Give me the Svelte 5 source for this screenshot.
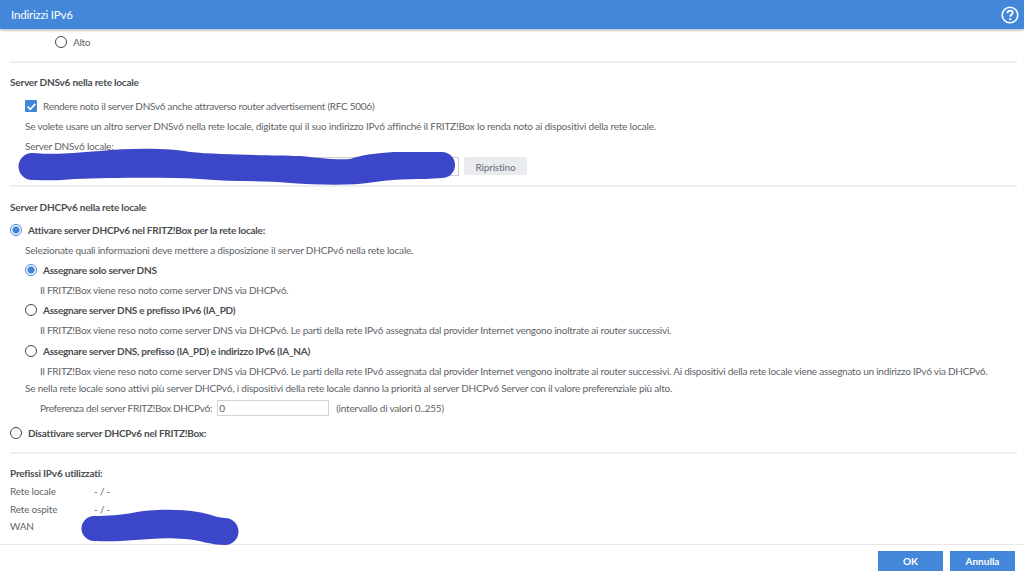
<script>
  const dnsOptions = [
    { label: 'Assegnare solo server DNS', checked: true, note: 'Il FRITZ!Box viene reso noto come server DNS via DHCPv6.' },
    { label: 'Assegnare server DNS e prefisso IPv6 (IA_PD)', checked: false, note: 'Il FRITZ!Box viene reso noto come server DNS via DHCPv6. Le parti della rete IPv6 assegnata dal provider Internet vengono inoltrate ai router successivi.' },
    { label: 'Assegnare server DNS, prefisso (IA_PD) e indirizzo IPv6 (IA_NA)', checked: false, note: 'Il FRITZ!Box viene reso noto come server DNS via DHCPv6. Le parti della rete IPv6 assegnata dal provider Internet vengono inoltrate ai router successivi. Ai dispositivi della rete locale viene assegnato un indirizzo IPv6 via DHCPv6.' }
  ];
  const prefixes = [
    { name: 'Rete locale', value: '- / -' },
    { name: 'Rete ospite', value: '- / -' },
    { name: 'WAN', value: '' }
  ];
</script>

<div class="dialog">
  <header class="topbar">
    <span class="title">Indirizzi IPv6</span>
    <svg class="help" width="18" height="18" viewBox="0 0 18 18">
      <circle cx="9" cy="9" r="7.8" fill="none" stroke="#fff" stroke-width="1.6" />
      <path d="M6.4 7.2c0-1.6 1.1-2.6 2.7-2.6s2.6 1 2.6 2.2c0 1.9-2.5 1.9-2.5 3.9" fill="none" stroke="#fff" stroke-width="1.8" />
      <circle cx="9.2" cy="13.2" r="1.1" fill="#fff" />
    </svg>
  </header>

  <main class="content">
    <label class="row alto"><span class="radio"></span>Alto</label>
    <hr />

    <h3>Server DNSv6 nella rete locale</h3>
    <div class="indent">
      <label class="row">
        <span class="check">
          <svg width="11" height="11" viewBox="0 0 11 11"><path d="M1.6 5.6l2.7 2.7 5-5.4" fill="none" stroke="#fff" stroke-width="1.7" /></svg>
        </span>
        Rendere noto il server DNSv6 anche attraverso router advertisement (RFC 5006)
      </label>
      <p>Se volete usare un altro server DNSv6 nella rete locale, digitate qui il suo indirizzo IPv6 affinché il FRITZ!Box lo renda noto ai dispositivi della rete locale.</p>
      <p>Server DNSv6 locale:</p>
      <div class="server-row">
        <input class="server-input" type="text" />
        <button class="reset" type="button">Ripristino</button>
      </div>
    </div>
    <hr class="second" />

    <h3 class="dhcp-title">Server DHCPv6 nella rete locale</h3>
    <label class="row strong first"><span class="radio on"></span>Attivare server DHCPv6 nel FRITZ!Box per la rete locale:</label>
    <div class="indent">
      <p>Selezionate quali informazioni deve mettere a disposizione il server DHCPv6 nella rete locale.</p>
      {#each dnsOptions as opt}
        <label class="row strong"><span class="radio" class:on={opt.checked}></span>{opt.label}</label>
        <p class="note">{opt.note}</p>
      {/each}
      <p class="tight">Se nella rete locale sono attivi più server DHCPv6, i dispositivi della rete locale danno la priorità al server DHCPv6 Server con il valore preferenziale più alto.</p>
      <div class="pref">
        <span class="pref-label">Preferenza del server FRITZ!Box DHCPv6:</span>
        <input class="pref-input" type="text" value="0" />
        <span class="range">(intervallo di valori 0..255)</span>
      </div>
    </div>
    <label class="row strong off"><span class="radio"></span>Disattivare server DHCPv6 nel FRITZ!Box:</label>
    <hr class="third" />

    <h3 class="prefix-title">Prefissi IPv6 utilizzati:</h3>
    <dl class="prefixes">
      {#each prefixes as p}
        <dt>{p.name}</dt>
        <dd>{p.value}</dd>
      {/each}
    </dl>
  </main>

  <footer class="actions">
    <button class="primary" type="button">OK</button>
    <button class="primary" type="button">Annulla</button>
  </footer>

  <!-- scribbles painted over the addresses -->
  <svg class="scribble" width="1024" height="575" viewBox="0 0 1024 575">
    <path d="M32 153C60 155 70 153 100 151C130 148 170 148 190 152C220 155 270 155 300 156C320 158 335 160 350 159C365 154 385 152 400 152L442 152A13 13 0 0 1 442 178C420 180 400 178 375 182C350 186 320 185 290 183C260 180 230 182 200 179C160 177 110 178 75 179C55 181 45 180 32 180A13.500 13.500 0 0 1 32 153Z" fill="#3c46c8" />
    <path d="M94 516C110 516 120 515 132 513C150 509 180 509 198 512C210 514 218 518 225 518A13 13 0 0 1 225 545C210 545 200 540 185 539C165 537 150 539 135 540C115 542 100 541 94 541A12.500 12.500 0 0 1 94 516Z" fill="#3c46c8" />
  </svg>
</div>

<style>
  :global(body) {
    margin: 0;
    background: #fff;
  }
  .dialog {
    position: relative;
    width: 1024px;
    height: 575px;
    overflow: hidden;
    display: flex;
    flex-direction: column;
    font-family: Lato, "Open Sans", sans-serif;
    font-size: 10px;
    letter-spacing: -0.2px;
    color: #5f6367;
  }
  .topbar {
    height: 29px;
    flex: none;
    display: flex;
    align-items: center;
    justify-content: space-between;
    padding: 0 5px 0 11px;
    background: #4287d9;
    box-shadow: 0 1px 3px rgba(0, 0, 0, 0.35);
    color: #fff;
    position: relative;
  }
  .title {
    font-size: 11.5px;
  }
  .content {
    flex: 1;
    padding: 3px 7px 0 10px;
    line-height: 20px;
  }
  hr {
    border: 0;
    border-top: 2px solid #eceef0;
    margin: 9px 0 9px;
  }
  hr.second {
    margin: 9px 0 10px;
  }
  hr.third {
    margin: 9px 0 9px;
  }
  h3 {
    margin: 0;
    font-size: 10px;
    line-height: 20px;
    font-weight: 700;
    color: #4a4d51;
  }
  .dhcp-title {
    margin-bottom: 3px;
  }
  .row {
    display: flex;
    align-items: center;
    gap: 6px;
    height: 20px;
    letter-spacing: -0.28px;
  }
  .row.strong {
    font-weight: 700;
    color: #4a4d51;
    letter-spacing: -0.25px;
  }
  .alto {
    margin-left: 45px;
    height: 20px;
  }
  .off {
    margin-top: 5px;
  }
  .indent {
    padding-left: 15px;
  }
  .indent > .row:first-child {
    margin-top: 4px;
  }
  p {
    margin: 0;
    line-height: 20px;
    white-space: nowrap;
  }
  .note {
    padding-left: 15px;
    line-height: 20.34px;
    letter-spacing: -0.24px;
  }
  .tight {
    line-height: 14px;
    margin-top: 0;
  }
  .radio {
    width: 10px;
    height: 10px;
    flex: none;
    border: 1.3px solid #45484c;
    border-radius: 50%;
    box-sizing: content-box;
    background: #fff;
  }
  .radio.on {
    border-color: #4287d9;
    background: radial-gradient(circle, #4287d9 0 3.2px, #fff 4px);
  }
  .check {
    width: 12px;
    height: 12px;
    flex: none;
    border-radius: 1px;
    background: #3f85d8;
    display: flex;
    align-items: center;
    justify-content: center;
  }
  .server-row {
    display: flex;
    align-items: center;
    gap: 5px;
    height: 20px;
  }
  .server-input {
    width: 434px;
    height: 19px;
    box-sizing: border-box;
    border: 1px solid #c9ccd0;
    background: #fff;
    padding: 0;
  }
  .reset {
    width: 63px;
    height: 18px;
    padding: 0;
    border: 0;
    border-radius: 2px;
    background: #e9ebee;
    color: #66707c;
    font: inherit;
    letter-spacing: inherit;
  }
  .pref {
    display: flex;
    align-items: center;
    height: 20px;
    padding-left: 15px;
    margin-top: 3px;
  }
  .pref-label {
    letter-spacing: -0.33px;
  }
  .pref-input {
    width: 112px;
    height: 16px;
    box-sizing: border-box;
    margin-left: 5px;
    padding: 0 0 0 1px;
    border: 1px solid #cfd2d6;
    font: inherit;
    color: #5c6064;
  }
  .range {
    margin-left: 7px;
  }
  .prefix-title {
    margin-bottom: 0;
  }
  .prefixes {
    margin: 0;
    display: grid;
    grid-template-columns: 84px 1fr;
    grid-auto-rows: 17.5px;
    line-height: 17.5px;
  }
  dt, dd {
    margin: 0;
  }
  .actions {
    flex: none;
    height: 31px;
    border-top: 1px solid #e4e6e8;
    display: flex;
    justify-content: flex-end;
    align-items: flex-start;
    gap: 7px;
    padding: 6px 9px 0 0;
    box-sizing: border-box;
  }
  .primary {
    width: 65px;
    height: 20px;
    padding: 0;
    border: 0;
    background: #4287d9;
    color: #fff;
    font: 700 10px Lato, sans-serif;
  }
  .scribble {
    position: absolute;
    left: 0;
    top: 0;
    pointer-events: none;
  }
</style>
